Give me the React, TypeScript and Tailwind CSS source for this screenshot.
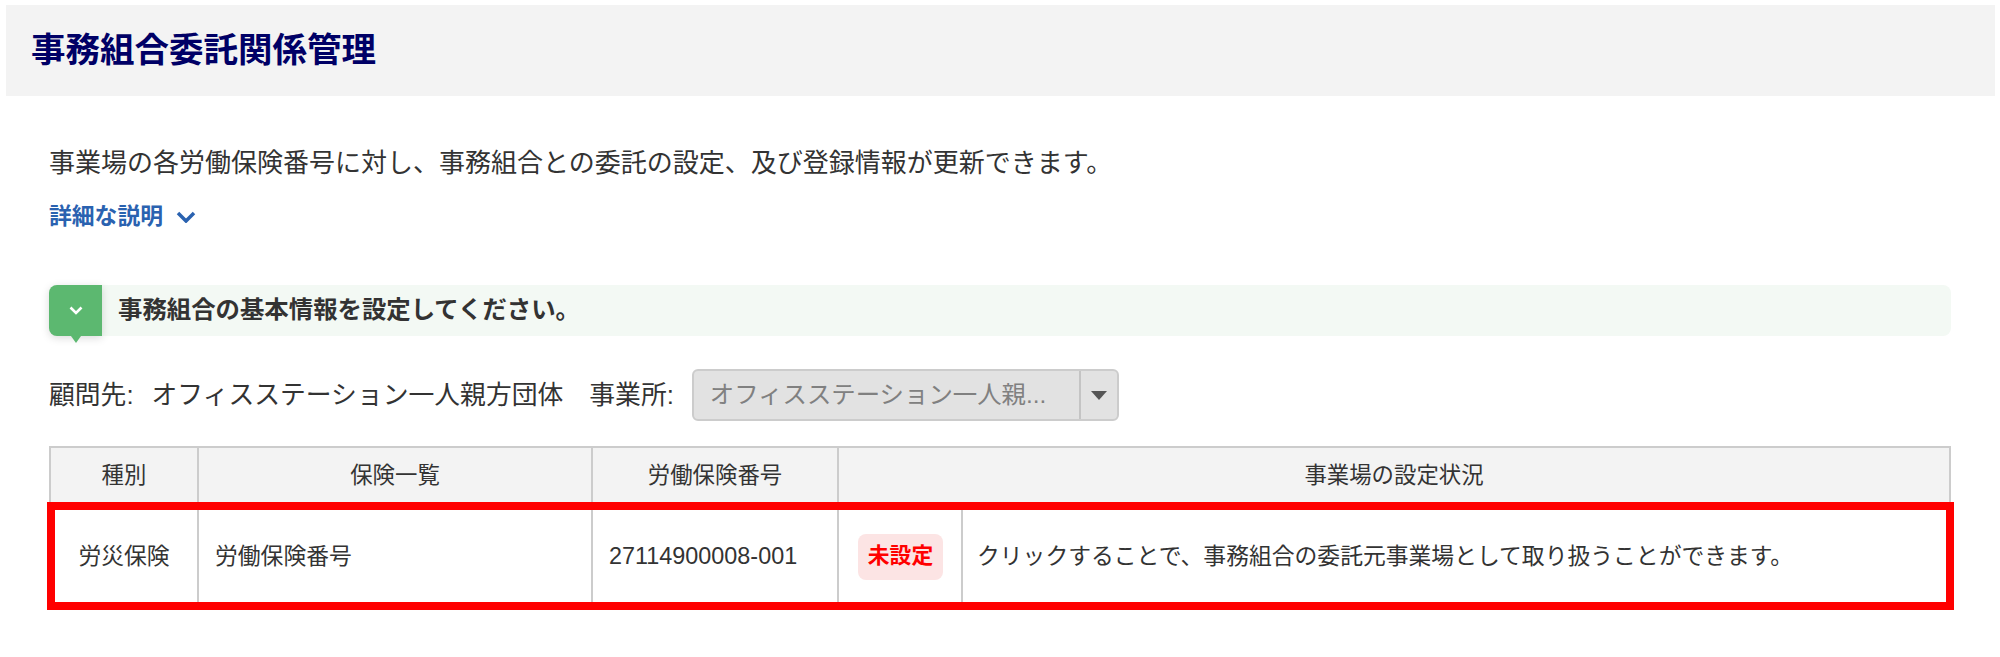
const FONT = "font-['Liberation_Sans','Noto_Sans_CJK_JP',sans-serif]";

function Chevron({ className, strokeWidth, d, box }: { className: string; strokeWidth: number; d: string; box: string }) {
  return (
    <svg viewBox={box} fill="none" stroke="currentColor" strokeWidth={strokeWidth} className={className}>
      <path d={d} />
    </svg>
  );
}

export default function App() {
  return (
    <div className={`${FONT} h-[657px] overflow-hidden bg-white pt-[5px] text-[#333333]`}>
      <header className="ml-[6px] mr-[5px] flex h-[91px] items-center bg-[#f3f3f3] pl-[25px]">
        <h1 className="text-[34.5px] leading-none font-bold text-[#000066]">事務組合委託関係管理</h1>
      </header>

      <main className="mx-[49px] pt-[49px]">
        <p className="text-[26px] leading-[36px]">
          事業場の各労働保険番号に対し、事務組合との委託の設定、及び登録情報が更新できます。
        </p>

        <a className="mt-[19px] flex items-center gap-[13px] text-[22.8px] leading-[32px] font-bold text-[#2a62b0]">
          詳細な説明
          <Chevron box="0 0 20 12" d="M2 2L10 10L18 2" strokeWidth={3.5} className="mt-[2px] h-[12px] w-[20px]" />
        </a>

        <div className="mt-[53px] flex h-[51px] items-center rounded-lg bg-[#f3f9f4]">
          <div className="relative flex h-full w-[53px] items-center justify-center rounded-l-lg bg-[#5cb870] shadow-[0_2px_8px_rgba(0,0,0,0.15)]">
            <Chevron box="0 0 14 9" d="M1.5 1.5L7 7L12.5 1.5" strokeWidth={2.6} className="h-[9px] w-[14px] text-white" />
            <span className="absolute top-full left-1/2 -ml-[5px] h-0 w-0 border-x-[5px] border-t-[7px] border-x-transparent border-t-[#5cb870]" />
          </div>
          <span className="ml-[16px] text-[24.4px] font-bold">事務組合の基本情報を設定してください。</span>
        </div>

        <div className="mt-[33px] flex items-center text-[25.8px]">
          <span>顧問先:</span>
          <span className="ml-[18px]">オフィスステーション一人親方団体</span>
          <span className="ml-[26px]">事業所:</span>
          <div className="ml-[18px] flex h-[52px] w-[427px] items-center rounded-md border-2 border-[#cccccc] bg-[#e2e2e2]">
            <span className="flex-1 pl-[16px] text-[24.4px] text-[#808080]">オフィスステーション一人親...</span>
            <span className="flex h-full w-[38px] items-center justify-center border-l-2 border-[#c4c4c4]">
              <span className="h-0 w-0 border-x-[8px] border-t-[9px] border-x-transparent border-t-[#555555]" />
            </span>
          </div>
        </div>

        <div className="relative mt-[25px]">
          <table className="w-full table-fixed border-collapse text-[22.8px]">
            <colgroup>
              <col className="w-[148px]" />
              <col className="w-[394px]" />
              <col className="w-[246px]" />
              <col className="w-[124px]" />
              <col />
            </colgroup>
            <thead>
              <tr className="h-[57px] bg-[#f3f3f3] text-[22.4px]">
                <th className="border-2 border-[#cccccc] font-normal">種別</th>
                <th className="border-2 border-[#cccccc] font-normal">保険一覧</th>
                <th className="border-2 border-[#cccccc] font-normal">労働保険番号</th>
                <th colSpan={2} className="border-2 border-[#cccccc] font-normal">事業場の設定状況</th>
              </tr>
            </thead>
            <tbody>
              <tr className="h-[104px]">
                <td className="border-x-2 border-[#cccccc] text-center">労災保険</td>
                <td className="border-x-2 border-[#cccccc] pl-[16px]">労働保険番号</td>
                <td className="border-x-2 border-[#cccccc] pl-[16px] text-[23.4px]">27114900008-001</td>
                <td className="border-x-2 border-[#cccccc] pl-[19px]">
                  <span className="flex h-[46px] w-[85px] items-center justify-center rounded-lg bg-[#fce4e4] text-[21.8px] font-bold text-[#ff0000]">
                    未設定
                  </span>
                </td>
                <td className="border-x-2 border-[#cccccc] pl-[14px]">
                  クリックすることで、事務組合の委託元事業場として取り扱うことができます。
                </td>
              </tr>
            </tbody>
          </table>
          <div className="absolute top-[56px] -right-[3px] -left-[2px] h-[108px] border-[8px] border-[#ff0000]" />
        </div>
      </main>
    </div>
  );
}
